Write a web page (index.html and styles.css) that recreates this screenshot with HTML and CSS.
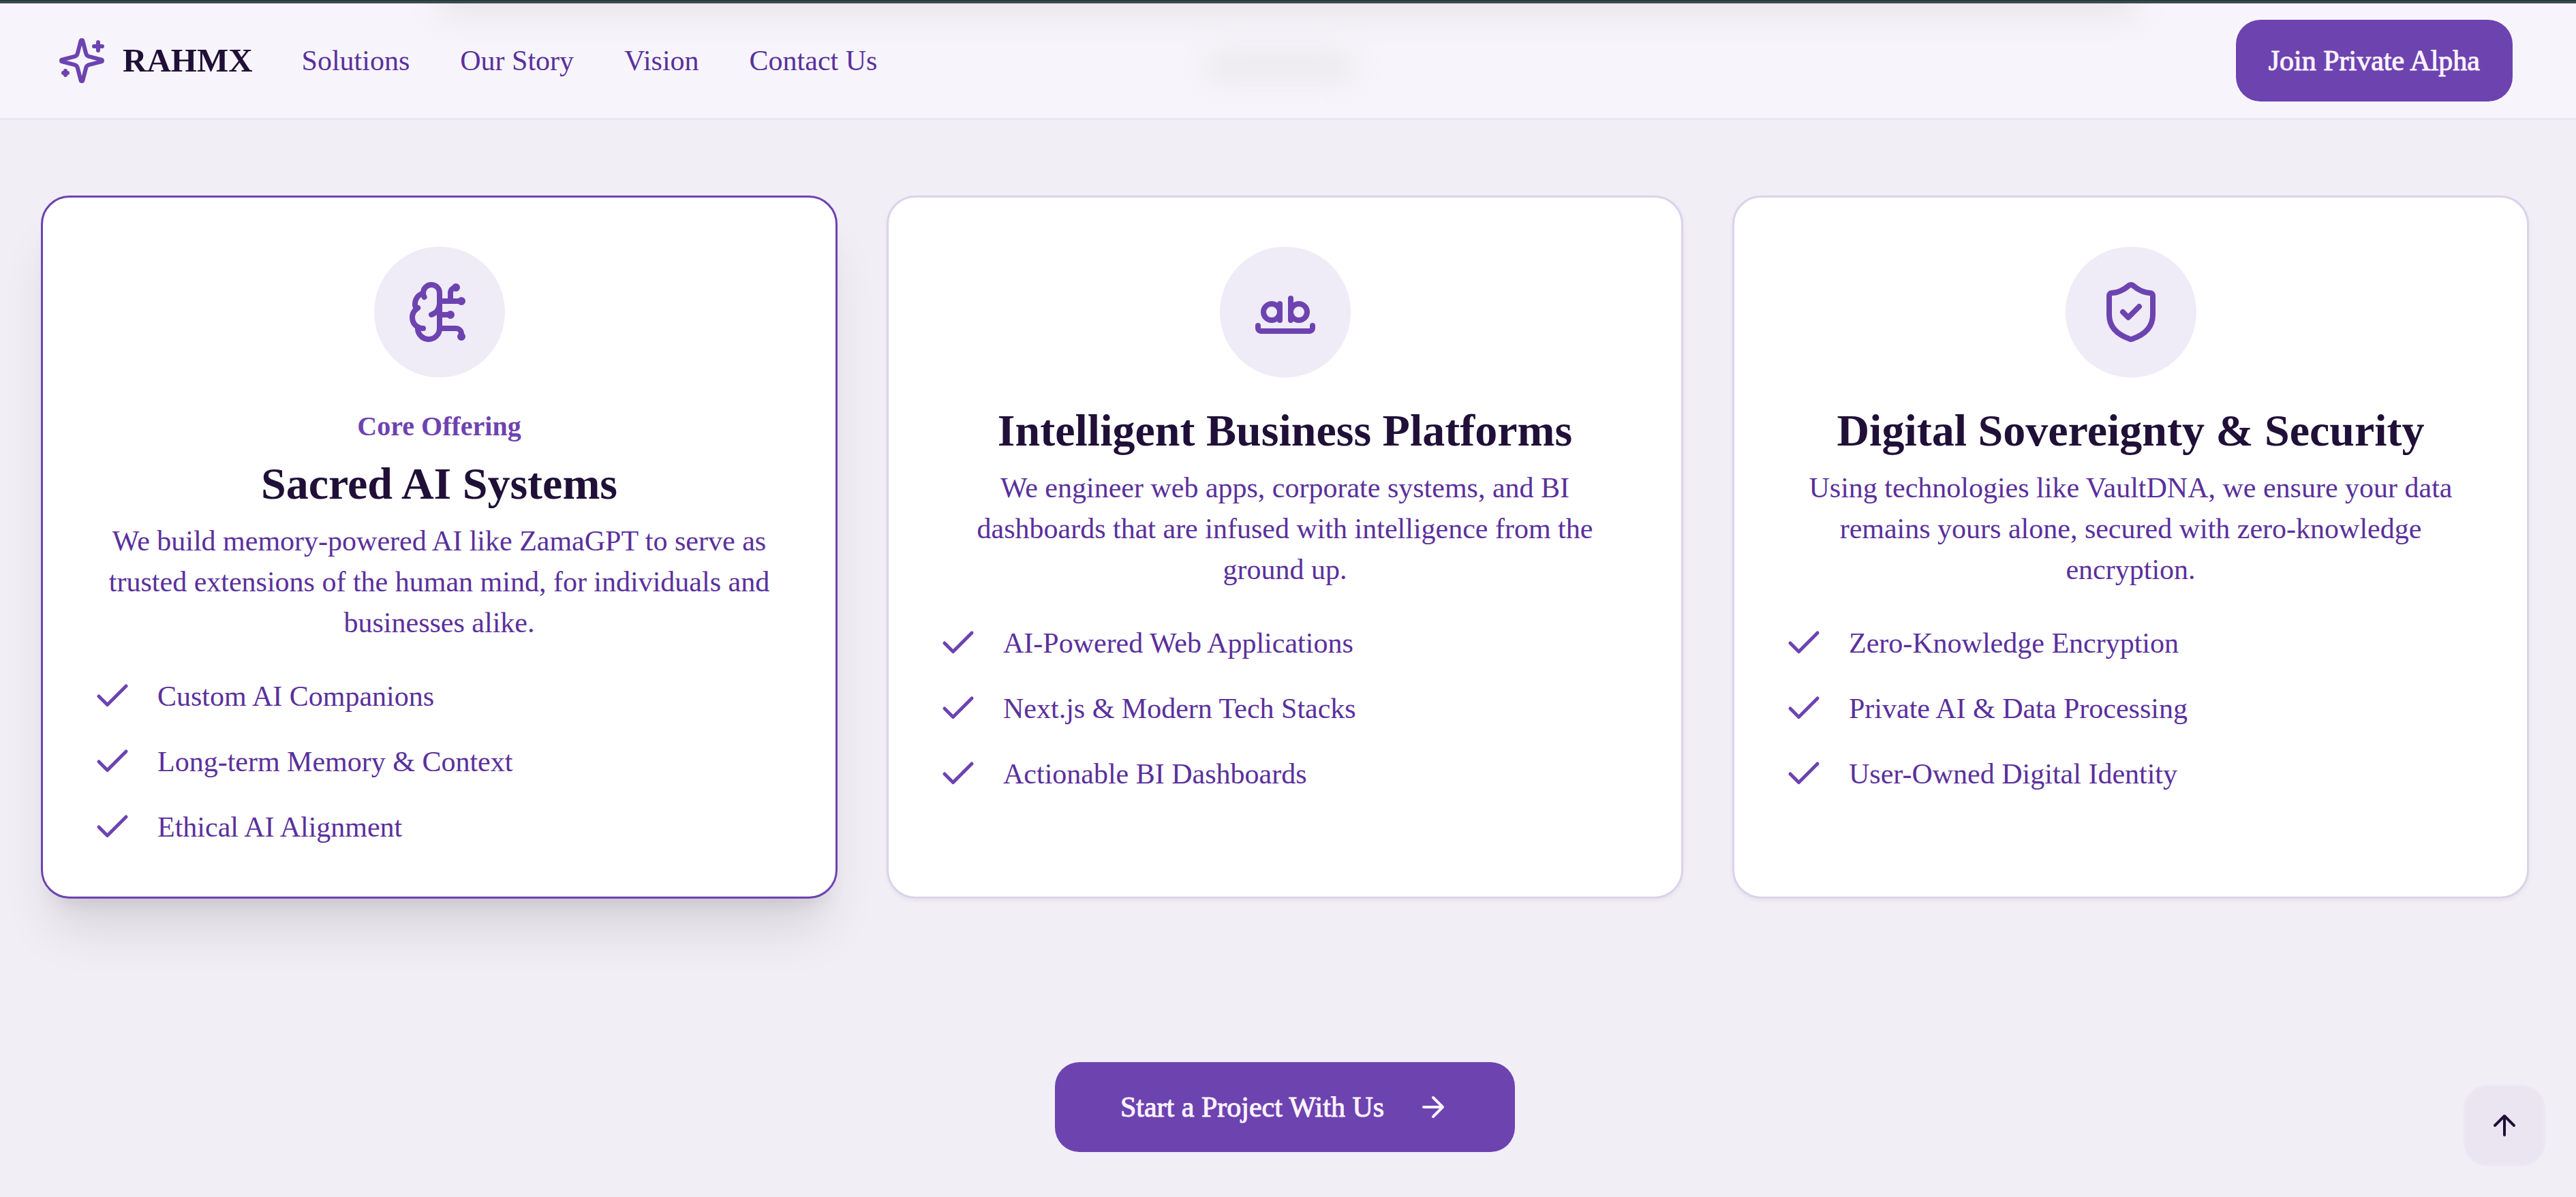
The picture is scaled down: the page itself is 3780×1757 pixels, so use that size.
FILE: index.html
```html
<!DOCTYPE html>
<html lang="en">
<head>
<meta charset="utf-8">
<meta name="viewport" content="width=device-width, initial-scale=1">
<title>RAHMX</title>
<link rel="stylesheet" href="styles.css">
</head>
<body>
<svg class="sprite" aria-hidden="true">
  <symbol id="check" viewBox="0 0 24 24"><path d="M20 6 9 17l-5-5"/></symbol>
</svg>
<div class="topline"></div>
<header class="header">
  <span class="haze haze-wide"></span>
  <span class="haze haze-spot"></span>
  <a class="brand" href="#">
    <svg class="icon icon-72" viewBox="0 0 24 24" aria-hidden="true"><path d="M9.937 15.5A2 2 0 0 0 8.5 14.063l-6.135-1.582a.5.5 0 0 1 0-.962L8.5 9.936A2 2 0 0 0 9.937 8.5l1.582-6.135a.5.5 0 0 1 .963 0L14.063 8.5A2 2 0 0 0 15.5 9.937l6.135 1.581a.5.5 0 0 1 0 .964L15.5 14.063a2 2 0 0 0-1.437 1.437l-1.582 6.135a.5.5 0 0 1-.963 0z"/><path d="M20 3v4M22 5h-4M4 17v2M5 18H3"/></svg>
    <span class="brand-name">RAHMX</span>
  </a>
  <nav class="nav">
    <a href="#solutions">Solutions</a>
    <a href="#story">Our Story</a>
    <a href="#vision">Vision</a>
    <a href="#contact">Contact Us</a>
  </nav>
  <button class="btn btn-alpha" type="button">Join Private Alpha</button>
</header>
<main class="main" id="solutions">
  <div class="cards">
    <article class="card card-core">
      <div class="badge">
        <svg class="icon icon-96" viewBox="0 0 24 24" aria-hidden="true"><path d="M12 5a3 3 0 1 0-5.997.125 4 4 0 0 0-2.526 5.77 4 4 0 0 0 .556 6.588A4 4 0 1 0 12 18Z"/><path d="M9 13a4.500 4.500 0 0 0 3-4M6.003 5.125A3 3 0 0 0 6.401 6.500M3.477 10.896a4 4 0 0 1 .585-.396M6 18a4 4 0 0 1-1.967-.516M12 13h4M12 18h6a2 2 0 0 1 2 2v1M12 8h8M16 8V5a2 2 0 0 1 2-2"/><circle cx="16" cy="13" r=".5"/><circle cx="18" cy="3" r=".5"/><circle cx="20" cy="21" r=".5"/><circle cx="20" cy="8" r=".5"/></svg>
      </div>
      <div class="intro">
        <p class="eyebrow">Core Offering</p>
        <h3 class="title">Sacred AI Systems</h3>
        <p class="text">We build memory-powered AI like ZamaGPT to serve as trusted extensions of the human mind, for individuals and businesses alike.</p>
      </div>
      <ul class="list">
        <li><svg class="icon icon-60" aria-hidden="true"><use href="#check"/></svg>Custom AI Companions</li>
        <li><svg class="icon icon-60" aria-hidden="true"><use href="#check"/></svg>Long-term Memory &amp; Context</li>
        <li><svg class="icon icon-60" aria-hidden="true"><use href="#check"/></svg>Ethical AI Alignment</li>
      </ul>
    </article>
    <article class="card">
      <div class="badge">
        <svg class="icon icon-96" viewBox="0 0 24 24" aria-hidden="true"><circle cx="7" cy="12" r="3"/><path d="M10 9v6"/><circle cx="17" cy="12" r="3"/><path d="M14 7v8M22 17v1c0 .5-.5 1-1 1H3c-.5 0-1-.5-1-1v-1"/></svg>
      </div>
      <div class="intro">
        <h3 class="title">Intelligent Business Platforms</h3>
        <p class="text">We engineer web apps, corporate systems, and BI dashboards that are infused with intelligence from the ground up.</p>
      </div>
      <ul class="list">
        <li><svg class="icon icon-60" aria-hidden="true"><use href="#check"/></svg>AI-Powered Web Applications</li>
        <li><svg class="icon icon-60" aria-hidden="true"><use href="#check"/></svg>Next.js &amp; Modern Tech Stacks</li>
        <li><svg class="icon icon-60" aria-hidden="true"><use href="#check"/></svg>Actionable BI Dashboards</li>
      </ul>
    </article>
    <article class="card">
      <div class="badge">
        <svg class="icon icon-96" viewBox="0 0 24 24" aria-hidden="true"><path d="M20 13c0 5-3.500 7.500-7.660 8.950a1 1 0 0 1-.67-.01C7.500 20.500 4 18 4 13V6a1 1 0 0 1 1-1c2 0 4.500-1.200 6.240-2.720a1.170 1.170 0 0 1 1.520 0C14.510 3.810 17 5 19 5a1 1 0 0 1 1 1z"/><path d="m9 12 2 2 4-4"/></svg>
      </div>
      <div class="intro">
        <h3 class="title">Digital Sovereignty &amp; Security</h3>
        <p class="text">Using technologies like VaultDNA, we ensure your data remains yours alone, secured with zero-knowledge encryption.</p>
      </div>
      <ul class="list">
        <li><svg class="icon icon-60" aria-hidden="true"><use href="#check"/></svg>Zero-Knowledge Encryption</li>
        <li><svg class="icon icon-60" aria-hidden="true"><use href="#check"/></svg>Private AI &amp; Data Processing</li>
        <li><svg class="icon icon-60" aria-hidden="true"><use href="#check"/></svg>User-Owned Digital Identity</li>
      </ul>
    </article>
  </div>
  <button class="btn btn-start" type="button">Start a Project With Us
    <svg class="icon icon-48" viewBox="0 0 24 24" aria-hidden="true"><path d="M5 12h14M12 5l7 7-7 7"/></svg>
  </button>
</main>
<button class="to-top" type="button" aria-label="Back to top">
  <svg class="icon icon-48" viewBox="0 0 24 24" aria-hidden="true"><path d="m5 12 7-7 7 7M12 19V5"/></svg>
</button>
</body>
</html>
```
FILE: styles.css
```css
:root {
  --purple: #6d43b0;
  --purple-text: #5a309c;
  --ink: #201038;
  --line: #e9e6f5;
}

* { box-sizing: border-box; }

body {
  margin: 0;
  padding-right: 9px;
  min-height: 100vh;
  background: #f1eef6;
  color: var(--purple-text);
  font-family: "Liberation Serif", serif;
  font-size: 42px;
  line-height: 60px;
}

h3, p, ul { margin: 0; padding: 0; }

a { color: inherit; text-decoration: none; }

button { font: inherit; cursor: pointer; }

.sprite { display: none; }

.icon {
  display: block;
  flex: none;
  fill: none;
  stroke: currentColor;
  stroke-width: 2;
  stroke-linecap: round;
  stroke-linejoin: round;
}

.icon-48 { width: 48px; height: 48px; }
.icon-60 { width: 60px; height: 60px; }
.icon-72 { width: 72px; height: 72px; }
.icon-96 { width: 96px; height: 96px; }

.btn .icon { -webkit-text-stroke: 0; }

.topline {
  height: 5px;
  margin-right: -9px;
  background: linear-gradient(#233f42 2px, #444a4c 2px);
}

.header {
  position: relative;
  display: flex;
  align-items: center;
  gap: 72px;
  margin-right: -9px;
  padding: 24px 93px 24px 84px;
  overflow: hidden;
  background: #f7f5fb;
  border-bottom: 3px solid var(--line);
}

.haze {
  position: absolute;
  background: #dcdadd;
  filter: blur(22px);
}

.haze-wide { top: -30px; left: 17%; right: 17%; height: 52px; opacity: .5; }
.haze-spot { top: 72px; left: 1770px; width: 216px; height: 40px; opacity: .5; }

.brand, .nav, .btn-alpha { position: relative; }

.brand {
  display: flex;
  align-items: center;
  gap: 24px;
  color: var(--purple);
}

.brand-name {
  color: var(--ink);
  font-size: 49px;
  font-weight: 700;
}

.nav { display: flex; gap: 74px; }

.btn {
  display: flex;
  align-items: center;
  gap: 48px;
  border: 0;
  border-radius: 36px;
  background: var(--purple);
  color: #fcf3ff;
  -webkit-text-stroke: 1px;
}

.btn-alpha { margin-left: auto; padding: 30px 48px; }
.btn-start { margin: 240px auto 0; padding: 36px 96px; }

.main { padding: 111px 60px 60px; }

.cards {
  display: grid;
  grid-template-columns: repeat(3, 1fr);
  gap: 72px;
}

.card {
  padding: 72px;
  border: 3px solid #dbd3ea;
  border-radius: 42px;
  background: #fff;
  box-shadow: 0 3px 6px rgba(0, 0, 0, .05);
}

.card-core {
  border-color: var(--purple);
  box-shadow: 0 60px 75px -15px rgba(0, 0, 0, .1), 0 24px 30px -18px rgba(0, 0, 0, .1);
}

.badge {
  display: flex;
  align-items: center;
  justify-content: center;
  width: 192px;
  height: 192px;
  margin: 0 auto 42px;
  border-radius: 50%;
  background: #efebf7;
  color: var(--purple);
}

.intro {
  display: flex;
  flex-direction: column;
  gap: 18px;
  text-align: center;
}

.eyebrow { color: var(--purple); font-size: 40px; font-weight: 700; }

.title {
  color: var(--ink);
  font-size: 66px;
  font-weight: 700;
  line-height: 72px;
}

.list {
  display: flex;
  flex-direction: column;
  gap: 36px;
  margin-top: 48px;
  list-style: none;
}

.list li { display: flex; gap: 36px; }
.list .icon { color: var(--purple); }

.to-top {
  position: fixed;
  right: 45px;
  bottom: 45px;
  display: flex;
  align-items: center;
  justify-content: center;
  width: 120px;
  height: 120px;
  padding: 0;
  border: 3px solid #ebe8f6;
  border-radius: 36px;
  background: #eae5f0;
  color: var(--ink);
}
```
